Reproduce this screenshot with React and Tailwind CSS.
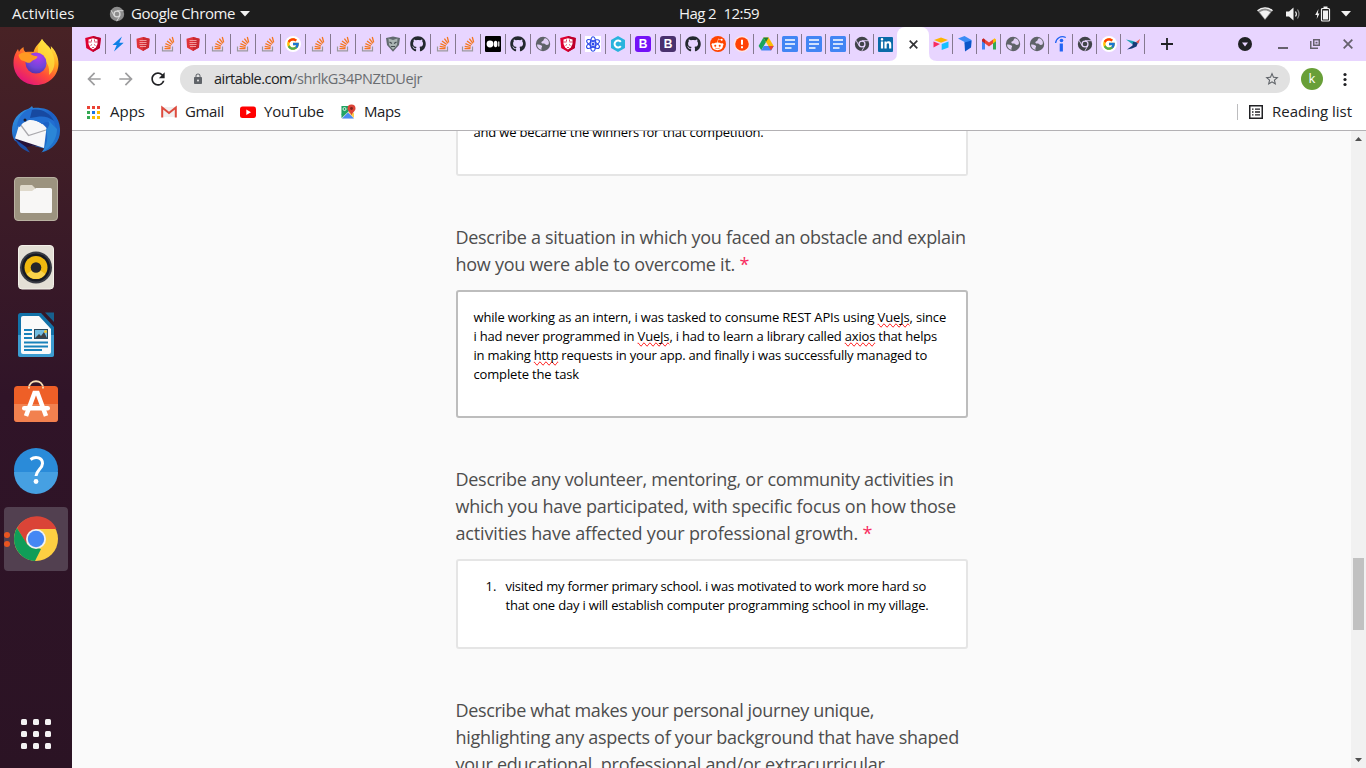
import { FaGithub, FaRedditAlien, FaLinkedinIn } from "react-icons/fa";
import { FcGoogle } from "react-icons/fc";
import { MdArrowBack, MdArrowForward, MdRefresh, MdLock, MdStarBorder } from "react-icons/md";

/* ---------- favicons ---------- */

function Svg({ children, box = "0 0 16 16", className = "size-4" }) {
  return (
    <svg viewBox={box} className={className} fill="none">
      {children}
    </svg>
  );
}

const Shield = () => (
  <Svg>
    <path d="M8 0 15.800 2 14.800 12 8 16 1.200 12 .2 2Z" fill="#dd0031" />
    <path d="M8 0 15.800 2 14.800 12 8 16Z" fill="#bd002b" />
    <path d="M3.500 3.500 8 2.300 12.500 3.500 12.500 8 10.800 11.500 8 13.500 5.200 11.500 3.500 8Z" fill="#fff" />
    <path d="M3.500 6h3M9.500 6h3M6.500 3.500v2M9.500 3.500v2M5.500 9.500l1.500-1M10.500 9.500 9 8.500M7 11.500h2" stroke="#d2224a" strokeWidth=".8" />
  </Svg>
);
const Bolt = () => (
  <Svg>
    <path d="M12 .5 2.500 9h4.200L4 15.500 13.700 6.800H9.300Z" fill="#0f80e6" />
  </Svg>
);
const RedBook = () => (
  <Svg>
    <path d="M8 1 14.500 2.800 14 11.500 8 15 2 11.500 1.500 2.800Z" fill="#e0353b" />
    <path d="M8 1 14.500 2.800 14 11.500 8 15Z" fill="#cb2a30" />
    <path d="M4.500 4.500h7M4.500 6.500h7M4.500 8.500h7M5 10.500h6" stroke="#f29a9a" />
  </Svg>
);
const Stack = () => (
  <Svg>
    <path d="M2.500 10.500v4.300h10v-4.300" stroke="#9b999d" strokeWidth="1.200" />
    <path d="M4.500 12.600h6M4.700 10.300l5.900 1M5.400 7.700l5.500 2.300M7 5l4.800 3.600M9.400 2.600l3.500 4.800M12.300 1l1.400 5.400" stroke="#f4761f" strokeWidth="1.300" />
  </Svg>
);
const Google = () => (
  <span className="flex size-4 items-center justify-center rounded-full bg-white">
    <FcGoogle className="size-[14px]" />
  </span>
);
const Mask = () => (
  <Svg>
    <path d="M8 .5 15 2 14 9 8 15.800 2 9 1 2Z" fill="#626b6f" />
    <path d="M8 4 12.500 2.500 12 9 8 13.500 4 9 3.500 2.500Z" fill="#aab5b3" />
    <path d="M4.500 6l2.500 1.500M11.500 6 9 7.500M6 10.500h4" stroke="#444c50" strokeWidth="1.200" />
  </Svg>
);
const Github = () => <FaGithub className="size-4 text-[#24292e]" />;
const Medium = () => (
  <Svg>
    <rect width="16" height="16" rx="1" fill="#000" />
    <circle cx="5" cy="8" r="3.400" fill="#fff" />
    <ellipse cx="10.600" cy="8" rx="1.800" ry="3.200" fill="#fff" />
    <rect x="13.200" y="5.300" width="1.200" height="5.400" rx=".6" fill="#fff" />
  </Svg>
);
const Globe = () => (
  <Svg>
    <circle cx="8" cy="8" r="7.200" fill="#5f6368" />
    <path d="M10 2.300C8.500 3 9 4 8 5c-1 .5-2 .5-1.500 2 1 1 2.500 0 3.500 1s2 1.500 3.700.3C14.500 5.500 13 3 10 2.300Z" fill="#e0d0f4" />
    <path d="M2 8.500c1.500-.3 3 0 4.500 1 1 .8.500 1.500 0 2.200-.3.600.2 1.300 0 2.100C4 13.300 2 11.500 2 8.500Z" fill="#e0d0f4" />
  </Svg>
);
const Atom = () => (
  <Svg>
    <rect width="16" height="16" fill="#fff" />
    <g stroke="#2e4bea" strokeWidth="1.100">
      <ellipse cx="8" cy="8" rx="7.200" ry="2.700" transform="rotate(30 8 8)" />
      <ellipse cx="8" cy="8" rx="7.200" ry="2.700" transform="rotate(90 8 8)" />
      <ellipse cx="8" cy="8" rx="7.200" ry="2.700" transform="rotate(150 8 8)" />
    </g>
    <circle cx="8" cy="8" r="1.500" fill="#2e4bea" />
  </Svg>
);
const HexC = () => (
  <Svg>
    <path d="M8 0 15 4v8l-7 4-7-4V4Z" fill="#29b3dd" />
    <path d="M10.800 5.800A3.500 3.500 0 1 0 10.800 10.200" stroke="#fff" strokeWidth="2" />
  </Svg>
);
const Bootstrap = ({ dark }) => (
  <span
    className={
      dark
        ? "flex size-4 items-center justify-center rounded-[3px] bg-[#4a326e] font-['Liberation_Sans'] text-[12px] leading-none font-bold text-white"
        : "flex size-4 items-center justify-center rounded-[3px] bg-[#7411f7] font-['Liberation_Sans'] text-[12px] leading-none font-bold text-white"
    }
  >
    B
  </span>
);
const Reddit = () => (
  <span className="flex size-4 items-center justify-center rounded-full bg-[#ff4500]">
    <FaRedditAlien className="size-[13px] text-white" />
  </span>
);
const Alert = () => (
  <Svg>
    <circle cx="8" cy="8" r="8" fill="#fde6e6" />
    <circle cx="8" cy="8" r="6.800" fill="#ff4206" />
    <path d="M8 3.800v5M8 10.300v2" stroke="#fff" strokeWidth="2" />
  </Svg>
);
const Drive = () => (
  <Svg>
    <path d="M5.400 1.500 8 6 3.300 14.300.6 10Z" fill="#1aa55a" />
    <path d="M5.400 1.500h5.200L15.700 10h-5.300Z" fill="#fbbc04" />
    <path d="M5.400 1.500h5.200L8 6Z" fill="#188038" />
    <path d="M5.700 10h10L13 14.500H3.200Z" fill="#4285f4" />
    <path d="M10.400 10h5.300L13 14.500Z" fill="#ea4335" />
  </Svg>
);
const Docs = () => (
  <Svg>
    <rect width="16" height="16" rx="1.500" fill="#4285f4" />
    <path d="M3 4h10M3 8h10M3 12h6.500" stroke="#fff" strokeWidth="1.700" />
  </Svg>
);
const ChromeMono = ({ className = "size-4", a = "#414449", b = "#e8d5ff" }) => (
  <Svg className={className}>
    <circle cx="8" cy="8" r="7.200" fill={a} />
    <circle cx="8" cy="8" r="3.600" fill={b} />
    <circle cx="8" cy="8" r="2.300" fill={a} />
    <path d="M8 4.700h6.500M5.100 9.700 2 4.200M10.900 9.700 7.700 15.200" stroke={b} strokeWidth=".9" />
  </Svg>
);
const LinkedIn = () => (
  <span className="flex size-[15px] items-center justify-center rounded-[1px] bg-[#0a6ba8]">
    <FaLinkedinIn className="size-3 text-white" />
  </span>
);
const Airtable = () => (
  <Svg>
    <path d="M1 4 8 1.500 15 4 8 6.700Z" fill="#fcb400" />
    <path d="M8.700 8 15.500 5.500v6L8.700 14Z" fill="#18bfff" />
    <path d="M.5 5.500 7 8 .5 11.500Z" fill="#f82b60" />
  </Svg>
);
const BlueFold = () => (
  <Svg>
    <path d="M1 2.500 7.500 0 14.500 4 14 11 8 8.500 7.500 6Z" fill="#3b8cf5" />
    <path d="M7.500 6.500 14.500 4.500 14 11.500 8 15.500Z" fill="#0b57c9" />
  </Svg>
);
const GmailNew = () => (
  <Svg>
    <path d="M1 4v9.500h3V7Z" fill="#4285f4" />
    <path d="M15 4v9.500h-3V7Z" fill="#34a853" />
    <path d="M1 3.500 2.500 2.300 4 3.500v4L1 5.300Z" fill="#c5221f" />
    <path d="M4 3.500 8 6.500l4-3v4L8 10.500 4 7.500Z" fill="#ea4335" />
    <path d="M15 3.500 13.500 2.300 12 3.500v4l3-2.200Z" fill="#fbbc04" />
  </Svg>
);
const Indeed = () => (
  <Svg>
    <path d="M6.700 7.500h3.200v8H6.700Z" fill="#2164f4" />
    <circle cx="8.500" cy="4.500" r="1.800" fill="#2164f4" />
    <path d="M2.600 7C3 2.500 7.500-.8 12.800 1.500" stroke="#2164f4" strokeWidth="1.300" />
  </Svg>
);
const Bird = () => (
  <Svg>
    <path d="M1 3.500 8 5 13 7 8.500 9Z" fill="#1ba3b5" />
    <path d="M8 6 13 6.500 11.500 10.500 7 12.500 2 13.500 7.500 9.500Z" fill="#153a75" />
    <path d="M11 6 15 3 13.500 7.500Z" fill="#e8574a" />
  </Svg>
);

const wideTabs = [
  Shield, Bolt, RedBook, Stack, RedBook, Stack, Stack, Stack, Google, Stack, Stack, Stack, Mask,
  Github, Stack, Stack, Medium, Github, Globe, Shield, Atom, HexC, Bootstrap, "dark", Github,
];
const narrowTabs = [Reddit, Alert, Drive, Docs, Docs, Docs, ChromeMono];
const rightTabs = [Airtable, BlueFold, GmailNew, Globe, Globe, Indeed, ChromeMono, Google, Bird];

function Tab({ icon: Icon, wide }) {
  return (
    <div className={wide ? "flex h-5 w-[25px] shrink-0 items-center justify-center border-r border-[#85798f]" : "flex h-5 w-6 shrink-0 items-center justify-center border-r border-[#85798f]"}>
      {Icon === "dark" ? <Bootstrap dark /> : <Icon />}
    </div>
  );
}

/* ---------- desktop panel ---------- */

function TopBar() {
  return (
    <header className="flex h-[27px] shrink-0 items-center bg-[#1d1d1d] text-[15px] leading-[27px] text-[#f2f2f2]">
      <div className="flex w-[679px] items-center pl-3">
        <span className="w-[97px] tracking-[0.07px]">Activities</span>
        <ChromeMono className="size-4" a="#8d8d8d" b="#dcdcdc" />
        <span className="ml-[6px] w-[104px] tracking-[-0.41px] whitespace-nowrap">Google Chrome</span>
        <Svg box="0 0 10 6" className="ml-[5px] h-[6px] w-[10px]">
          <path d="M0 0h10L5 5.500Z" fill="#f2f2f2" />
        </Svg>
      </div>
      <div className="flex w-20 justify-between whitespace-nowrap">
        <span className="tracking-[-0.6px]">Hag 2</span>
        <span className="tracking-[-0.55px]">12:59</span>
      </div>
      <div className="ml-auto flex items-center gap-3 pr-[15px]">
        <Svg>
          <path d="M.5 4.800C5 .8 11 .8 15.500 4.800L8 14Z" fill="#8e8e8e" />
          <path d="M2.700 6.200C6 3.800 10 3.800 13.300 6.200L8 13Z" fill="#f2f2f2" />
          <path d="M.5 4.800C5 .8 11 .8 15.500 4.800" stroke="#f2f2f2" strokeWidth="1.200" />
        </Svg>
        <Svg>
          <path d="M1 5.500h3L8.500 1.500v13L4 10.500H1Z" fill="#f2f2f2" />
          <path d="M10.500 5.500q1.800 2.500 0 5" stroke="#f2f2f2" strokeWidth="1.200" />
          <path d="M12.500 3.500q3 4.500 0 9" stroke="#8a8a8a" strokeWidth="1.200" />
        </Svg>
        <Svg className="-mr-[2px] ml-[2px] size-4">
          <path d="M3.500 3 .2 9h2l-.5 4L4.500 7.500H2.800Z" fill="#f2f2f2" />
          <path d="M8.500 1.500h4" stroke="#f2f2f2" strokeWidth="2" />
          <rect x="6.500" y="2.500" width="8" height="12.500" rx="1" stroke="#f2f2f2" strokeWidth="1.200" />
          <rect x="8" y="4.500" width="5" height="9" fill="#f2f2f2" />
        </Svg>
        <Svg box="0 0 10 6" className="h-[6px] w-[10px]">
          <path d="M0 0h10L5 5.500Z" fill="#f2f2f2" />
        </Svg>
      </div>
    </header>
  );
}

function Firefox() {
  return (
    <Svg box="0 0 48 48" className="size-12">
      <defs>
        <linearGradient id="fx" x1=".85" y1=".05" x2=".25" y2=".95">
          <stop offset="0" stopColor="#fff44f" />
          <stop offset=".35" stopColor="#ffa01e" />
          <stop offset=".65" stopColor="#ff4b38" />
          <stop offset="1" stopColor="#e3167a" />
        </linearGradient>
        <radialGradient id="fxGlobe" cx=".6" cy=".2" r=".9">
          <stop offset="0" stopColor="#b03bf0" />
          <stop offset=".6" stopColor="#6f46d8" />
          <stop offset="1" stopColor="#4b2fa0" />
        </radialGradient>
      </defs>
      <path
        d="M30 1C33 6 37 8 39 12c0-2 0-3-.3-4 4.500 4 8 11 7.800 18C46.200 38 36.500 47 24.500 47 12 47 1.500 38 1.500 25c0-7 2.500-11 4.500-14l1 3c1-2 2-3.500 4.500-5 0 2 .5 4 2 5 3-.5 6-.5 8 0C23 8 28 5 30 1Z"
        fill="url(#fx)"
      />
      <path d="M30 1c3 5 7 7 9 11 5 9 5 19-2 25 1-9-2-13-7-16-5-4-6-12 0-20Z" fill="#ffe13d" opacity=".75" />
      <circle cx="24" cy="25" r="10.500" fill="url(#fxGlobe)" />
      <path d="M6.500 17c4-4 9-3 12-1 2 1.500 5 2 7 2.500 0 3-5 3-6.500 5.500-2.500 2-5 0-7-1-3 0-5-3-5.500-6Z" fill="#ff9a22" />
    </Svg>
  );
}

function Thunderbird() {
  return (
    <Svg box="0 0 48 48" className="size-12">
      <defs>
        <linearGradient id="tb" x1="0" y1="0" x2="1" y2="1">
          <stop offset="0" stopColor="#38a0e8" />
          <stop offset=".5" stopColor="#1c5fc4" />
          <stop offset="1" stopColor="#2279d0" />
        </linearGradient>
      </defs>
      <path d="M20 0c-1 1-2 2-4 3C6 6 0 14 0 25c0 4 1 7 3 10l31 8-5 3.500C41 44 48 35 48 25 48.500 12 40 2.500 28 2c-3-.3-5 0-7 0Z" fill="url(#tb)" />
      <path d="M3 32 32 41 20 39.500 12 42C7 39 4 36 3 32Z" fill="#261238" />
      <path d="M3 33c3 7 8 11 15 13.500L14 41Z" fill="#1c4fa8" />
      <path d="M8 16C14 10 28 14 34.500 22L32 42 3 32.500Z" fill="#f7f7f8" />
      <path d="m8 18 8.500 11.500L34 24" stroke="#aaa9ad" strokeWidth="1.300" />
      <path d="M5 20c1-10 8-16 13-17 14-2 25 8 26 20-3-6-9-9-14-5-5-4-13-5-15-3-3 1-6 3-7 6Z" fill="#226ed1" />
      <path d="M20 4c9-2 18 3 22 11-8-6-13-5-24-3Z" fill="#1749a1" />
      <path d="M34 24c4-4 4-7 2-10l9 9c0 10-6 19-15 23 6-8 6-15 4-22Z" fill="#2b86d7" />
      <circle cx="13" cy="14" r="1.500" fill="#1a1a2b" />
    </Svg>
  );
}

function Files() {
  return (
    <Svg box="0 0 48 48" className="mt-px size-12">
      <rect x="2.500" y="2.500" width="43" height="43" rx="3.500" fill="#9c937f" stroke="#b9b1a1" />
      <path d="M8 11.500q0-1.500 1.500-1.500H20l3 3v6H8Z" fill="#dfd9cb" />
      <path d="M8 16h12l4-3h14.500q1.500 0 1.500 1.500v22q0 1.500-1.500 1.500h-29Q8 38 8 36.500Z" fill="#f8f7f6" />
    </Svg>
  );
}

function Rhythmbox() {
  return (
    <Svg box="0 0 48 48" className="mt-px size-12">
      <rect x="6.500" y="2.500" width="35" height="43.500" rx="3.500" fill="#e3dfd5" stroke="#f3f0e9" />
      <circle cx="24" cy="24.500" r="16" fill="#383b43" />
      <circle cx="24" cy="24.500" r="14" fill="#171a22" />
      <circle cx="24" cy="24.500" r="11.500" fill="#f0b90f" />
      <path d="M24 24.500 14.500 31a11.500 11.500 0 0 0 19 0Z" fill="#f9d24a" />
      <circle cx="24" cy="24.500" r="5.300" fill="#25252a" />
    </Svg>
  );
}

function Writer() {
  return (
    <Svg box="0 0 48 48" className="mt-px size-12">
      <path d="M6 4.500Q6 2 8.500 2H29l13 14v27.500Q42 46 39.500 46h-31Q6 46 6 43.500Z" fill="#1272a8" />
      <path d="M6 24h36v19.500Q42 46 39.500 46h-31Q6 46 6 43.500Z" fill="#3c9cd0" />
      <path d="M33 1.500h9v9.500Z" fill="#17608e" />
      <path d="M9 7q0-2 2-2h16l12 13v23q0 2-2 2H11q-2 0-2-2Z" fill="#fafafa" />
      <path d="M12 19h8M12 23h8M12 27h8M12 31.500h24M12 35.500h24M12 39h18" stroke="#1881ba" strokeWidth="2" />
      <rect x="22.500" y="18.500" width="13" height="9" fill="#72bde0" stroke="#28485d" />
      <path d="m23 27 4-4 2 2 3-4 3 6Z" fill="#3d4144" />
      <circle cx="33.500" cy="20.500" r="1.500" fill="#f4c52d" />
    </Svg>
  );
}

function Software() {
  return (
    <Svg box="0 0 48 48" className="mb-[5px] size-12">
      <path d="M17 12c0-9 14-9 14 0" stroke="#f8dfb5" strokeWidth="1.800" />
      <rect x="2" y="10" width="44" height="36" rx="3.500" fill="#ee5f27" />
      <path d="M2 28h44v14.500q0 3.500-3.500 3.500h-37Q2 46 2 42.500Z" fill="#f2814f" />
      <path d="M17 12.500v-2M31 12.500v-2" stroke="#f8dfb5" strokeWidth="1.800" />
      <path d="m14 40 8.500-23h3L34 40" stroke="#fff" strokeWidth="4.500" />
      <rect x="10" y="30" width="28" height="4.500" rx="2.200" fill="#fff" />
    </Svg>
  );
}

function Help() {
  return (
    <Svg box="0 0 48 48" className="size-12">
      <circle cx="24" cy="24" r="22" fill="#2a8bd9" />
      <path d="M2 26h44a22 22 0 0 1-44 0Z" fill="#46a0e2" />
      <path d="M18.500 13.500C24 9.500 30.500 12 30.500 17.500c0 5-6 6.500-6.500 12.500" stroke="#fff" strokeWidth="3" />
      <circle cx="24" cy="35.500" r="2.400" fill="#fff" />
    </Svg>
  );
}

function Chrome() {
  return (
    <Svg box="0 0 48 48" className="size-12">
      <circle cx="24" cy="24" r="22" fill="#fdcf42" />
      <path d="M5 13A22 22 0 0 1 44.500 14H24L14.500 29Z" fill="#da4437" />
      <path d="M5 13 15.300 29.500 29 34 23 46A22 22 0 0 1 5 13Z" fill="#109d58" />
      <circle cx="24" cy="24" r="10" fill="#f1f1f1" />
      <circle cx="24" cy="24" r="8.200" fill="#4487f4" />
    </Svg>
  );
}

function Dock() {
  return (
    <nav className="flex w-[72px] shrink-0 flex-col items-center bg-linear-to-b from-[#482225] via-[#301428] via-50% to-[#2b1324] pt-px">
      {[Firefox, Thunderbird, Files, Rhythmbox, Writer, Software, Help].map((Icon, i) => (
        <div key={i} className="flex h-[68px] items-center justify-center">
          <Icon />
        </div>
      ))}
      <div className="mt-[3px] flex h-16 w-16 items-center rounded-[4px] bg-[#524050]">
        <div className="flex w-2 flex-col gap-[3px]">
          <span className="size-[6px] rounded-full bg-[#e95420]" />
          <span className="size-[6px] rounded-full bg-[#e95420]" />
        </div>
        <Chrome />
      </div>
      <div className="mt-auto mb-[19px] grid grid-cols-3 gap-[6px]">
        {Array.from({ length: 9 }, (_, i) => (
          <span key={i} className="size-[6px] rounded-[1.500px] bg-[#f4f2f3]" />
        ))}
      </div>
    </nav>
  );
}

/* ---------- browser chrome ---------- */

function TabStrip() {
  return (
    <div className="flex h-[34px] shrink-0 items-center bg-[#e8d5ff] pl-[9px]">
      {wideTabs.map((icon, i) => (
        <Tab key={i} icon={icon} wide />
      ))}
      {narrowTabs.map((icon, i) => (
        <Tab key={i} icon={icon} />
      ))}
      <div className="flex w-[23px] shrink-0 justify-center">
        <LinkedIn />
      </div>
      <div className="relative flex h-[34px] w-8 shrink-0 items-center justify-center rounded-t-lg bg-white">
        <Svg className="absolute bottom-0 -left-2 size-2" box="0 0 8 8">
          <path d="M8 0v8H0Q8 8 8 0Z" fill="#fff" />
        </Svg>
        <Svg className="absolute -right-2 bottom-0 size-2" box="0 0 8 8">
          <path d="M0 0v8h8Q0 8 0 0Z" fill="#fff" />
        </Svg>
        <Svg className="size-[9px]" box="0 0 9 9">
          <path d="m.7.7 7.600 7.600M8.300.7.7 8.300" stroke="#333336" strokeWidth="1.700" />
        </Svg>
      </div>
      {rightTabs.map((icon, i) => (
        <Tab key={i} icon={icon} />
      ))}
      <Svg className="ml-4 size-3" box="0 0 12 12">
        <path d="M6 0v12M0 6h12" stroke="#1f2024" strokeWidth="1.800" />
      </Svg>
      <div className="ml-auto flex items-center pr-[13px]">
        <Svg className="size-[14px]" box="0 0 14 14">
          <circle cx="7" cy="7" r="7" fill="#202124" />
          <path d="M4 5.500h6L7 9.500Z" fill="#e8d5ff" />
        </Svg>
        <Svg className="ml-[26px] size-[10px]" box="0 0 10 10">
          <path d="M0 9h10" stroke="#66616d" strokeWidth="2" />
        </Svg>
        <Svg className="ml-[22px] size-[10px]" box="0 0 10 10">
          <path d="M3.750.75h5.500v5.500h-5.500Z" stroke="#66616d" strokeWidth="1.500" />
          <path d="M.75 2v7.250H8" stroke="#66616d" strokeWidth="1.500" />
          <path d="M5.500 2.800h2v1.700h-2Z" fill="#66616d" />
        </Svg>
        <Svg className="ml-[23px] size-[10px]" box="0 0 10 10">
          <path d="m.7.7 8.600 8.600M9.300.7.7 9.300" stroke="#66616d" strokeWidth="1.800" />
        </Svg>
      </div>
    </div>
  );
}

function Toolbar() {
  return (
    <div className="flex h-9 shrink-0 items-center bg-white pl-3">
      <MdArrowBack className="size-5 text-[#9d9d9f]" />
      <MdArrowForward className="ml-3 size-5 text-[#9d9d9f]" />
      <MdRefresh className="ml-3 size-5 text-[#202124]" />
      <div className="ml-3 flex h-7 w-[1110px] items-center rounded-full bg-[#e1e1e1] pr-[10px] pl-3 text-[14.500px]">
        <MdLock className="size-3 text-[#5f6368]" />
        <span className="ml-[10px] w-[78px] tracking-[-0.54px] whitespace-nowrap text-[#202124]">airtable.com</span>
        <span className="tracking-[-0.41px] text-[#6a6d71]">/shrlkG34PNZtDUejr</span>
        <MdStarBorder className="ml-auto size-4 text-[#5f6368]" />
      </div>
      <span className="ml-[11px] flex size-[22px] items-center justify-center rounded-full bg-[#689f38] pb-px text-[13px] leading-none text-white">k</span>
      <Svg className="ml-[14px] size-4">
        <circle cx="8" cy="3.500" r="1.600" fill="#202124" />
        <circle cx="8" cy="8.500" r="1.600" fill="#202124" />
        <circle cx="8" cy="13.500" r="1.600" fill="#202124" />
      </Svg>
    </div>
  );
}

const appDots = ["#ea4335", "#ea4335", "#ea4335", "#34a853", "#1a73e8", "#fbbc04", "#34a853", "#fbbc04", "#fbbc04"];

function Bookmarks() {
  return (
    <div className="flex h-[34px] shrink-0 items-center border-b border-[#b3b1b4] bg-white pr-[14px] pb-[3px] pl-[15px] text-[15px] leading-5 text-[#202124]">
      <Svg className="size-[13px]" box="0 0 13 13">
        {appDots.map((c, i) => (
          <rect key={i} x={(i % 3) * 5} y={Math.floor(i / 3) * 5} width="3" height="3" fill={c} />
        ))}
      </Svg>
      <span className="mb-[2px] ml-[10px] w-[51px]">Apps</span>
      <Svg>
        <path d="M1 3h14v10H1Z" fill="#f0efef" />
        <path d="M1.200 13.500V3.500L8 9l6.800-5.500v10" stroke="#dd4b3e" strokeWidth="2" />
      </Svg>
      <span className="mb-[2px] ml-2 w-[55px] tracking-[-0.34px]">Gmail</span>
      <Svg>
        <rect y="2.500" width="16" height="11.500" rx="2.500" fill="#f00" />
        <path d="M6.300 5.500v5.500L11 8.250Z" fill="#fff" />
      </Svg>
      <span className="mb-[2px] ml-2 w-[76px] tracking-[-0.24px]">YouTube</span>
      <Svg>
        <path d="M1.500 2h12v12.500h-12Z" fill="#e3e3e3" />
        <path d="M1.500 2H10L1.500 11Z" fill="#1fa463" />
        <path d="M2 14.500 8 8.500l6 6Z" fill="#4a8af4" />
        <path d="m8.500 8.500 2-2 3.500 3v4.500Z" fill="#fdd04b" />
        <path d="M1.500 14V10L8 4l2 2Z" fill="#1fa463" />
        <circle cx="4.500" cy="5" r="1.500" stroke="#fff" strokeWidth=".8" />
        <path d="M11.500.5a4 4 0 0 1 4 4c0 2.500-3 3.500-4 7-1-3.500-4-4.500-4-7a4 4 0 0 1 4-4Z" fill="#dc4437" />
        <circle cx="11.500" cy="4.500" r="1.400" fill="#7b231e" />
      </Svg>
      <span className="mb-[2px] ml-2 tracking-[-0.41px]">Maps</span>
      <div className="ml-auto flex items-center">
        <span className="h-4 w-px bg-[#bdbdbf]" />
        <Svg className="ml-[11px] size-[14px]" box="0 0 14 14">
          <rect x=".75" y=".75" width="12.500" height="12.500" stroke="#202124" strokeWidth="1.500" />
          <path d="M3 4.200h1.500M6 4.200h5M3 7h1.500M6 7h5M3 9.800h1.500M6 9.800h5" stroke="#202124" strokeWidth="1.300" />
        </Svg>
        <span className="mb-[2px] ml-[9px] w-20 tracking-[-0.02px] whitespace-nowrap">Reading list</span>
      </div>
    </div>
  );
}

/* ---------- page ---------- */

const Star = () => <span className="ml-[4.500px] tracking-normal text-[#f82b60]">*</span>;
const Typo = ({ children }) => (
  <span className="[text-decoration-line:spelling-error]">{children}</span>
);

function Form() {
  return (
    <main className="flex min-h-0 flex-1 bg-[#fafafa]">
      <div className="flex flex-1 justify-center overflow-hidden">
        <div className="w-[512px] text-[18px] leading-[27px] whitespace-nowrap text-[#4d4d4d]">
          <div className="h-[45px] overflow-hidden rounded-b-[3px] border-2 border-t-0 border-[#e5e5e5] bg-white px-4 text-[13px] leading-[19px] text-black">
            <p className="-mt-2 tracking-[-0.18px]">and we became the winners for that competition.</p>
          </div>

          <h2 className="mt-12">
            <span className="block tracking-[-0.295px]">Describe a situation in which you faced an obstacle and explain</span>
            <span className="block tracking-[-0.269px]">how you were able to overcome it.<Star /></span>
          </h2>
          <div className="mt-3 h-32 rounded-[3px] border-2 border-[#bdbdbd] bg-white p-4 text-[13px] leading-[19px] text-black">
            <p className="tracking-[-0.166px]">while working as an intern, i was tasked to consume REST APIs using <Typo>VueJs</Typo>, since</p>
            <p className="tracking-[-0.187px]">i had never programmed in <Typo>VueJs</Typo>, i had to learn a library called <Typo>axios</Typo> that helps</p>
            <p className="tracking-[-0.209px]">in making <Typo>http</Typo> requests in your app. and finally i was successfully managed to</p>
            <p className="tracking-[-0.153px]">complete the task</p>
          </div>

          <h2 className="mt-12">
            <span className="block tracking-[-0.28px]">Describe any volunteer, mentoring, or community activities in</span>
            <span className="block tracking-[-0.255px]">which you have participated, with specific focus on how those</span>
            <span className="block tracking-[-0.159px]">activities have affected your professional growth.<Star /></span>
          </h2>
          <div className="mt-3 flex h-[90px] rounded-[3px] border-2 border-[#e5e5e5] bg-white py-4 pl-7 text-[13px] leading-[19px] text-black">
            <span className="w-5">1.</span>
            <div>
              <p className="tracking-[-0.226px]">visited my former primary school. i was motivated to work more hard so</p>
              <p className="tracking-[-0.185px]">that one day i will establish computer programming school in my village.</p>
            </div>
          </div>

          <h2 className="mt-12">
            <span className="block tracking-[-0.37px]">Describe what makes your personal journey unique,</span>
            <span className="block tracking-[-0.275px]">highlighting any aspects of your background that have shaped</span>
            <span className="block tracking-[-0.28px]">your educational, professional and/or extracurricular</span>
          </h2>
        </div>
      </div>
      <div className="flex w-[15px] shrink-0 flex-col items-center bg-[#f1f1f1]">
        <Svg className="mt-[6px] h-1 w-[7px]" box="0 0 7 4">
          <path d="M0 4 3.500 0 7 4Z" fill="#505050" />
        </Svg>
        <div className="mt-[417px] h-[72px] w-[11px] bg-[#c1c1c1]" />
        <Svg className="mt-auto mb-[6px] h-1 w-[7px]" box="0 0 7 4">
          <path d="M0 0 3.500 4 7 0Z" fill="#505050" />
        </Svg>
      </div>
    </main>
  );
}

export default function App() {
  return (
    <div className="flex h-[768px] w-[1366px] flex-col overflow-hidden font-['Open_Sans','Noto_Sans',sans-serif]">
      <TopBar />
      <div className="flex min-h-0 flex-1">
        <Dock />
        <div className="flex min-w-0 flex-1 flex-col">
          <TabStrip />
          <Toolbar />
          <Bookmarks />
          <Form />
        </div>
      </div>
    </div>
  );
}
